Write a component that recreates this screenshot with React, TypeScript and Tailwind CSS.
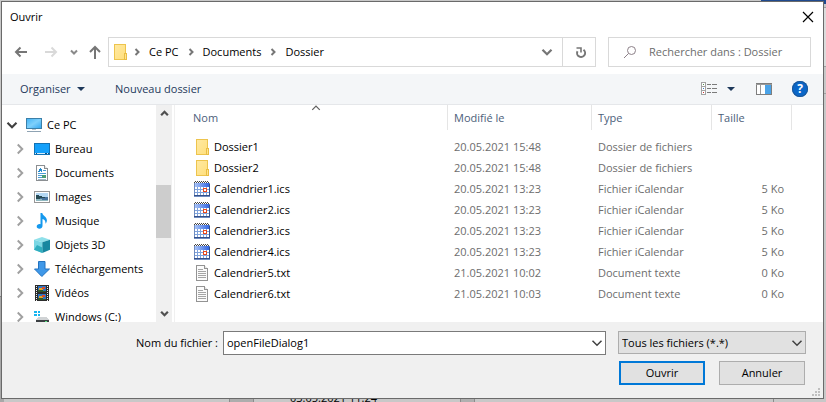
import type { ReactNode } from "react";

type IconProps = { children: ReactNode };

function Pixel({ children }: IconProps) {
  return (
    <svg aria-hidden="true" width="16" height="16" viewBox="0 0 16 16" className="shrink-0" shapeRendering="crispEdges">
      {children}
    </svg>
  );
}

function Smooth({ children }: IconProps) {
  return (
    <svg aria-hidden="true" width="16" height="16" viewBox="0 0 16 16" className="shrink-0">
      {children}
    </svg>
  );
}

function FolderIcon() {
  return (
    <Pixel>
      <defs>
        <linearGradient id="folderFill" x1="0" y1="0" x2="1" y2="1">
          <stop offset="0" stopColor="#ffe9a2" />
          <stop offset="1" stopColor="#ffdf7c" />
        </linearGradient>
      </defs>
      <rect x="2.5" y="0.5" width="11" height="15" fill="url(#folderFill)" stroke="#edc44d" />
      <rect x="12.5" y="9.5" width="2" height="6" fill="#ffe48d" stroke="#e9bd44" />
    </Pixel>
  );
}

function CalendarIcon() {
  return (
    <Pixel>
      <defs>
        <linearGradient id="calHead" x1="0" y1="0" x2="1" y2="0">
          <stop offset="0" stopColor="#a9c4f8" />
          <stop offset="1" stopColor="#3568e2" />
        </linearGradient>
      </defs>
      <rect x="0" y="2" width="16" height="14" fill="#6f8cc0" />
      <rect x="1" y="2" width="14" height="4" fill="url(#calHead)" />
      <rect x="1" y="6" width="14" height="9" fill="#7fa3dc" />
      {[6, 9, 12].map((y) =>
        [1, 4, 7, 10, 13].map((x) => <rect key={`${x}-${y}`} x={x} y={y} width="2" height="2" fill="#fff" />)
      )}
      <path d="M0 1h1v1H0zM2 1h1v1H2zM4 1h1v1H4zM6 1h1v1H6zM8 1h1v1H8zM10 1h1v1h-1zM12 1h1v1h-1zM14 1h1v1h-1zM1 0h1v1H1zM3 0h1v1H3zM5 0h1v1H5zM7 0h1v1H7zM9 0h1v1H9zM11 0h1v1h-1zM13 0h1v1h-1z" fill="#444" />
      <rect x="9.5" y="7.5" width="3" height="3" fill="#fff" stroke="#e8481c" />
      <path d="M15 3h1v12H0v-1h15z" fill="#34508a" />
    </Pixel>
  );
}

function TextFileIcon() {
  return (
    <Pixel>
      <path d="M2.5 0.5h8l3 3v12h-11z" fill="#fbfbfb" stroke="#939393" />
      <path d="M10.5 0.5v3h3" fill="#e4e4e4" stroke="#939393" />
      <path d="M4 4.5h5M4 6.5h8M4 8.5h8M4 10.5h8M4 12.5h8" stroke="#a5a5a5" />
    </Pixel>
  );
}

function ComputerIcon() {
  return (
    <Pixel>
      <defs>
        <linearGradient id="screen" x1="0" y1="0" x2="1" y2="1">
          <stop offset="0" stopColor="#3fb2f5" />
          <stop offset="0.5" stopColor="#7fd0fb" />
          <stop offset="1" stopColor="#2fa5f0" />
        </linearGradient>
      </defs>
      <rect x="0.5" y="1.5" width="15" height="10" fill="url(#screen)" stroke="#3b7fa8" />
      <path d="M6 12h4v1H6z" fill="#b9c6cf" />
      <path d="M1 14h14v1H1z" fill="#8fa3b3" />
    </Pixel>
  );
}

function DesktopIcon() {
  return (
    <Pixel>
      <rect x="0.5" y="2.5" width="15" height="11" fill="#14a0fa" stroke="#1272b4" />
      <path d="M1 12h14v1H1z" fill="#0b4f82" />
      <path d="M1 12h1v1H1zM3 12h8v1H3zM13 12h1v1h-1z" fill="#d8eefc" />
    </Pixel>
  );
}

function DocumentIcon() {
  return (
    <Pixel>
      <path d="M2.5 0.5h8l3 3v12h-11z" fill="#fff" stroke="#8b8f92" />
      <path d="M10.5 0.5v3h3" fill="#e4e4e4" stroke="#8b8f92" />
      <path d="M6 3h1v1h1v3H7V6H6v1H4V6h1V4h1z" fill="#2589cc" />
      <path d="M9 5.5h3M4 8.5h8M4 10.5h4M4 12.5h4" stroke="#4a9cd6" />
      <rect x="8" y="10" width="4" height="3" fill="#4c9e76" />
      <path d="M4 14.5h8" stroke="#9fb6c6" />
    </Pixel>
  );
}

function PictureIcon() {
  return (
    <Pixel>
      <rect x="0.5" y="2.5" width="15" height="11" fill="#fff" stroke="#969696" />
      <rect x="2" y="4" width="12" height="4" fill="#b4d8f4" />
      <rect x="2" y="8" width="12" height="4" fill="#47729c" />
      <path d="M2 6h3v1h3v1h3v1H6v1H2z" fill="#264a55" />
      <path d="M2 10h6v1h6v1H2z" fill="#8fb8c0" />
    </Pixel>
  );
}

function MusicIcon() {
  return (
    <Smooth>
      <path d="M6.5 0h1.800c.2 2.700 4.500 3.600 4.600 7.200 0 1.500-.6 2.600-1.400 3.600.3-2.800-1-4.300-3-4.800V13c0 1.600-1.400 2.800-3.100 2.800S2.700 14.900 2.700 13.600s1.300-2.500 2.800-2.500c.4 0 .7 0 1 .1z" fill="#1599ee" />
    </Smooth>
  );
}

function CubeIcon() {
  return (
    <Smooth>
      <path d="M8 0l8 2.700L8.300 5.300 0 2.700z" fill="#8fe0ea" />
      <path d="M0 2.700l8.300 2.600V16L0 12.800z" fill="#7ad7e4" />
      <path d="M8.300 5.300L16 2.700v10.100L8.300 16z" fill="#1787a0" />
      <path d="M0 12.800L3 8l5.300 2.500V16z" fill="#31aebf" />
    </Smooth>
  );
}

function DownloadIcon() {
  return (
    <Smooth>
      <path d="M4.500 0.500h6.500v7.500h4.500L7.800 15.500 0.500 8h4z" fill="#3f98e8" stroke="#2272c0" />
    </Smooth>
  );
}

function VideoIcon() {
  return (
    <Pixel>
      <rect x="1" y="0" width="14" height="16" fill="#2c2c2c" />
      <path d="M2.500 1v15M13.500 1v15" stroke="#f3f3f3" strokeDasharray="1 1" />
      <rect x="4" y="1" width="8" height="6" fill="#2d74c4" />
      <rect x="4" y="9" width="8" height="6" fill="#2d74c4" />
      <path d="M5 3h4v2H5zM5 11h4v2H5z" fill="#e7a525" />
      <path d="M8 2h3v2H8zM8 10h3v2H8z" fill="#d94b2b" />
      <path d="M4 5h5v1h3v1H4zM4 13h5v1h3v1H4z" fill="#31572c" />
    </Pixel>
  );
}

function DriveIcon() {
  return (
    <Pixel>
      <path d="M0 2h3v2H0zM4 2h2v2H4zM0 5h3v2H0zM4 5h2v2H4z" fill="#17b4ef" />
      <path d="M4 8h9l2 3H2z" fill="#d0d3d5" />
      <rect x="2" y="11" width="13" height="4" fill="#3b3f42" />
      <rect x="11" y="12" width="2" height="1" fill="#57e07e" />
    </Pixel>
  );
}

type ChevronProps = { dir: "right" | "down" | "up"; className: string; size?: number; stroke?: number };

/* Chevrons share an 8-unit grid, scaled by the size prop. */
function Chevron({ dir, className, size = 8, stroke = 2 }: ChevronProps) {
  const shape = { right: "M2.500 1l3 3-3 3", down: "M1 2.500l3 3 3-3", up: "M1 5.500l3-3 3 3" }[dir];
  return (
    <svg aria-hidden="true" width={size} height={size} viewBox="0 0 8 8" className={`shrink-0 ${className}`} fill="none" stroke="currentColor" strokeWidth={stroke}>
      <path d={shape} />
    </svg>
  );
}

function Triangle() {
  return (
    <svg aria-hidden="true" width="8" height="4" viewBox="0 0 8 4" className="shrink-0 text-[#1e395b]">
      <path d="M0 0h8L4 4z" fill="currentColor" />
    </svg>
  );
}

const places = [
  { name: "Bureau", icon: <DesktopIcon /> },
  { name: "Documents", icon: <DocumentIcon /> },
  { name: "Images", icon: <PictureIcon /> },
  { name: "Musique", icon: <MusicIcon /> },
  { name: "Objets 3D", icon: <CubeIcon /> },
  { name: "Téléchargements", icon: <DownloadIcon /> },
  { name: "Vidéos", icon: <VideoIcon /> },
  { name: "Windows (C:)", icon: <DriveIcon /> },
];

const files = [
  { name: "Dossier1", date: "20.05.2021 15:48", type: "Dossier de fichiers", size: "" },
  { name: "Dossier2", date: "20.05.2021 15:48", type: "Dossier de fichiers", size: "" },
  { name: "Calendrier1.ics", date: "20.05.2021 13:23", type: "Fichier iCalendar", size: "5 Ko" },
  { name: "Calendrier2.ics", date: "20.05.2021 13:23", type: "Fichier iCalendar", size: "5 Ko" },
  { name: "Calendrier3.ics", date: "20.05.2021 13:23", type: "Fichier iCalendar", size: "5 Ko" },
  { name: "Calendrier4.ics", date: "20.05.2021 13:23", type: "Fichier iCalendar", size: "5 Ko" },
  { name: "Calendrier5.txt", date: "21.05.2021 10:02", type: "Document texte", size: "0 Ko" },
  { name: "Calendrier6.txt", date: "21.05.2021 10:03", type: "Document texte", size: "0 Ko" },
];

function fileIcon(name: string) {
  if (name.endsWith(".ics")) return <CalendarIcon />;
  if (name.endsWith(".txt")) return <TextFileIcon />;
  return <FolderIcon />;
}

/* The window that lies behind the dialog, seen only at its edges. */
function Backdrop() {
  return (
    <div className="absolute inset-0 overflow-hidden">
      <div className="absolute top-0 right-0 h-1 w-[65px] bg-[#1f4a8f]" />
      <div className="absolute top-[7px] right-0 h-[60px] w-1 border-y border-[#a0a0a0] bg-[#dcdcdc]" />
      <div className="absolute top-[93px] right-0 h-px w-1 bg-[#a0a0a0]" />
      <div className="absolute bottom-0 left-0 h-[106px] w-1 border-t border-[#808080] bg-[#a8a8a8]" />
      <div className="absolute bottom-0 left-[229px] h-4 w-[25px] border-x border-[#8c8c8c] bg-[#adadad]" />
      <div className="absolute bottom-0 left-[254px] h-4 w-[206px] bg-[#c8c8c8]" />
      <div className="absolute bottom-0 left-[460px] h-4 w-[15px] border-x border-[#8c8c8c] bg-[#b0b0b0]" />
      <div className="absolute right-[52px] bottom-0 h-4 w-px bg-[#8c8c8c]" />
      <span className="absolute -bottom-1 left-[290px] leading-4">03.05.2021 11:24</span>
    </div>
  );
}

function NavBar() {
  return (
    <div className="flex h-[30px] shrink-0 items-stretch pr-3 pl-3">
      <div className="flex w-[94px] shrink-0 items-center text-[#767676]">
        <button aria-label="Précédent" className="w-[30px]">
          <svg width="14" height="14" viewBox="0 0 14 14" fill="none" stroke="currentColor" strokeWidth="2"><path d="M13 7H2M6.500 2.500L2 7l4.500 4.500" /></svg>
        </button>
        <button aria-label="Suivant" className="w-[26px] text-[#d9d9d9]">
          <svg width="14" height="14" viewBox="0 0 14 14" fill="none" stroke="currentColor" strokeWidth="2"><path d="M1 7h11M7.500 2.500L12 7l-4.500 4.500" /></svg>
        </button>
        <button aria-label="Emplacements récents" className="w-[18px]"><Chevron dir="down" className="text-[#8a8a8a]" /></button>
        <button aria-label="Dossier parent">
          <svg width="14" height="14" viewBox="0 0 14 14" fill="none" stroke="currentColor" strokeWidth="2"><path d="M7 14V2M2 7l5-5 5 5" /></svg>
        </button>
      </div>
      <div className="flex min-w-0 flex-1 items-center border border-[#d9d9d9] pl-[3px]">
        <FolderIcon />
        <Chevron dir="right" className="mr-2 ml-[5px] text-[#767676]" />
        <button className="whitespace-nowrap">Ce PC</button>
        <Chevron dir="right" className="mx-2 text-[#767676]" />
        <button className="whitespace-nowrap">Documents</button>
        <Chevron dir="right" className="mx-2 text-[#767676]" />
        <button className="whitespace-nowrap">Dossier</button>
        <button aria-label="Dérouler" className="ml-auto flex h-full w-8 items-center justify-center border-r border-[#d9d9d9]">
          <Chevron dir="down" size={12} stroke={1.5} className="text-[#767676]" />
        </button>
        <button aria-label="Actualiser" className="flex h-full w-8 items-center justify-center pl-1 text-[#767676]">
          <svg width="12" height="14" viewBox="0 0 12 14" fill="none" stroke="currentColor" strokeWidth="2"><path d="M8.500 4.800A4 4 0 1 1 2.500 6.200" /><path d="M1.500 3h4.500v4.500" strokeWidth="1.600" /></svg>
        </button>
      </div>
      <label className="ml-3 flex w-[203px] items-center border border-[#d9d9d9] pl-3.5">
        <svg aria-hidden="true" width="14" height="14" viewBox="0 0 14 14" className="shrink-0" fill="none" stroke="#8c8088">
          <circle cx="8.500" cy="5.500" r="4" />
          <path d="M5.500 8.500L1 13" />
        </svg>
        <input type="search" aria-label="Rechercher" placeholder="Rechercher dans : Dossier" className="ml-3 w-full min-w-0 outline-none placeholder:text-[#6d6d6d]" />
      </label>
    </div>
  );
}

function Toolbar() {
  return (
    <div className="mt-[7px] flex h-[31px] shrink-0 items-center border-b border-[#e5e7ea] bg-[#f4f6f8] pr-[15px] pl-[18px] text-[#1e395b]">
      <button className="flex w-[95px] items-center gap-1.5">
        Organiser <Triangle />
      </button>
      <button>Nouveau dossier</button>
      <button aria-label="Changer l'affichage" className="ml-auto flex items-center gap-[10px]">
        <svg width="16" height="14" viewBox="0 0 16 14" shapeRendering="crispEdges">
          <path d="M0.500 0.500h4v12h-4zM0 4.500h5M0 8.500h5" fill="#fff" stroke="#a3a3a3" />
          <path d="M2 2h1v1H2z" fill="#4f8f4f" />
          <path d="M2 6h1v1H2z" fill="#3c78c8" />
          <path d="M2 10h1v1H2z" fill="#cc3333" />
          <path d="M6 2.500h4M11 2.500h5M6 6.500h4M11 6.500h5M6 10.500h4M11 10.500h5" stroke="#7b7b7b" />
        </svg>
        <Triangle />
      </button>
      <button aria-label="Volet de visualisation" className="ml-[21px]">
        <svg width="16" height="12" viewBox="0 0 16 12" shapeRendering="crispEdges">
          <rect x="0.500" y="0.500" width="15" height="11" fill="#fff" stroke="#7e7e7e" />
          <path d="M0 1.500h16M4.500 2v9" stroke="#9a9a9a" />
          <rect x="9" y="2" width="6" height="9" fill="#4aa3e8" />
        </svg>
      </button>
      <button aria-label="Aide" className="ml-5 flex size-4 items-center justify-center rounded-full bg-[#0a66c8] text-[12px] font-bold text-white ring-1 ring-[#1d5796] ring-inset">
        ?
      </button>
    </div>
  );
}

function Tree() {
  return (
    <nav className="w-[154px] shrink-0 overflow-hidden pt-2">
      <div className="flex h-6 items-center pl-1">
        <Chevron dir="down" size={12} stroke={1.4} className="text-[#404040]" />
        <span className="ml-2 flex items-center gap-[5px] whitespace-nowrap"><ComputerIcon />Ce PC</span>
      </div>
      <ul>
        {places.map((p) => (
          <li key={p.name} className="flex h-6 items-center pl-3">
            <Chevron dir="right" size={12} stroke={1.3} className="text-[#a0a0a0]" />
            <span className="ml-2 flex items-center gap-[5px] whitespace-nowrap">{p.icon}{p.name}</span>
          </li>
        ))}
      </ul>
    </nav>
  );
}

function ScrollBar() {
  return (
    <div className="flex w-4 shrink-0 flex-col bg-[#f0f0f0]">
      <button aria-label="Défiler vers le haut" className="flex h-[17px] items-center justify-center"><Chevron dir="up" size={9} className="text-[#505050]" /></button>
      <div className="flex-[63]" />
      <div className="mr-px flex-[53] bg-[#cdcdcd]" />
      <div className="flex-[67]" />
      <button aria-label="Défiler vers le bas" className="flex h-[17px] items-center justify-center"><Chevron dir="down" size={9} className="text-[#505050]" /></button>
    </div>
  );
}

function FileTable() {
  return (
    <div className="ml-0.5 min-w-0 flex-1 overflow-hidden border-l border-[#f0f0f0]">
      <table className="w-full table-fixed border-separate border-spacing-0 text-left whitespace-nowrap">
        <colgroup>
          <col className="w-[273px]" />
          <col className="w-[144px]" />
          <col className="w-[120px]" />
          <col className="w-[80px]" />
          <col />
        </colgroup>
        <thead className="text-[#4c607a]">
          <tr className="h-[25px]">
            <th className="relative border-r border-[#e5e5e5] p-0 pl-[18px] font-normal">
              Nom
              <Chevron dir="up" size={10} stroke={1} className="absolute -top-0.5 left-1/2 text-[#606060]" />
            </th>
            <th className="border-r border-[#e5e5e5] p-0 pl-1.5 font-normal">Modifié le</th>
            <th className="border-r border-[#e5e5e5] p-0 pl-1.5 font-normal">Type</th>
            <th className="border-r border-[#e5e5e5] p-0 pl-1.5 font-normal">Taille</th>
            <td />
          </tr>
        </thead>
        <tbody className="text-[#6d6d6d]">
          <tr aria-hidden="true" className="h-1.5"><td colSpan={5} className="p-0" /></tr>
          {files.map((f) => (
            <tr key={f.name} className="h-[21px]">
              <td className="p-0 pl-[19px] text-black">
                <span className="flex items-center gap-1">{fileIcon(f.name)}{f.name}</span>
              </td>
              <td className="p-0 pl-1.5">{f.date}</td>
              <td className="p-0 pl-1.5">{f.type}</td>
              <td className="p-0 pr-2 text-right">{f.size}</td>
              <td className="p-0" />
            </tr>
          ))}
        </tbody>
      </table>
    </div>
  );
}

function Footer() {
  return (
    <form className="relative shrink-0 bg-[#f0f0f0] pt-[9px] pr-[17px] pb-[13px]" onSubmit={(e) => e.preventDefault()}>
      <div className="flex">
        <label htmlFor="filename" className="w-[221px] shrink-0 pr-[5px] text-right leading-6">Nom du fichier :</label>
        <div className="flex h-6 min-w-0 flex-1 items-center border border-[#7a7a7a] bg-white pr-0.5">
          <input id="filename" defaultValue="openFileDialog1" className="min-w-0 flex-1 pl-[3px] outline-none" />
          <Chevron dir="down" size={12} stroke={1} className="text-[#404040]" />
        </div>
        <div className="relative ml-3 w-[188px]">
          <select aria-label="Type de fichiers" className="h-[23px] w-full appearance-none border border-[#adadad] bg-[#e1e1e1] pl-[3px]">
            <option>Tous les fichiers (*.*)</option>
          </select>
          <Chevron dir="down" size={12} stroke={1} className="pointer-events-none absolute top-1.5 right-[3px] text-[#404040]" />
        </div>
      </div>
      <div className="mt-1.5 flex justify-end gap-[14px] pr-px">
        <button type="submit" className="h-6 w-[86px] border-2 border-[#0078d7] bg-[#e1e1e1]">Ouvrir</button>
        <button type="button" className="h-6 w-[86px] border border-[#adadad] bg-[#e1e1e1]">Annuler</button>
      </div>
      <svg aria-hidden="true" width="8" height="8" viewBox="0 0 8 8" className="absolute right-[3px] bottom-0.5" fill="#bfbfbf" shapeRendering="crispEdges">
        <path d="M6 0h2v2H6zM3 3h2v2H3zM6 3h2v2H6zM0 6h2v2H0zM3 6h2v2H3zM6 6h2v2H6z" />
      </svg>
    </form>
  );
}

export default function App() {
  return (
    <div className="relative flex h-screen bg-[#c8c8c8] pt-px pr-0.5 pb-[3px] pl-px font-['Open_Sans','Noto_Sans',sans-serif] text-[11px] leading-4 text-black">
      <Backdrop />
      <main className="relative flex min-w-0 flex-1 flex-col border border-[#6a6a6a] bg-white">
        <header className="flex h-[35px] shrink-0 justify-between pt-[7px] pr-[9px] pl-2">
          <h1>Ouvrir</h1>
          <button aria-label="Fermer" className="h-4">
            <svg width="12" height="12" viewBox="0 0 12 12" stroke="#000" strokeWidth="1.200"><path d="M1 1l10 10M11 1L1 11" /></svg>
          </button>
        </header>
        <NavBar />
        <Toolbar />
        <div className="flex min-h-0 flex-1">
          <Tree />
          <ScrollBar />
          <FileTable />
        </div>
        <Footer />
      </main>
    </div>
  );
}
